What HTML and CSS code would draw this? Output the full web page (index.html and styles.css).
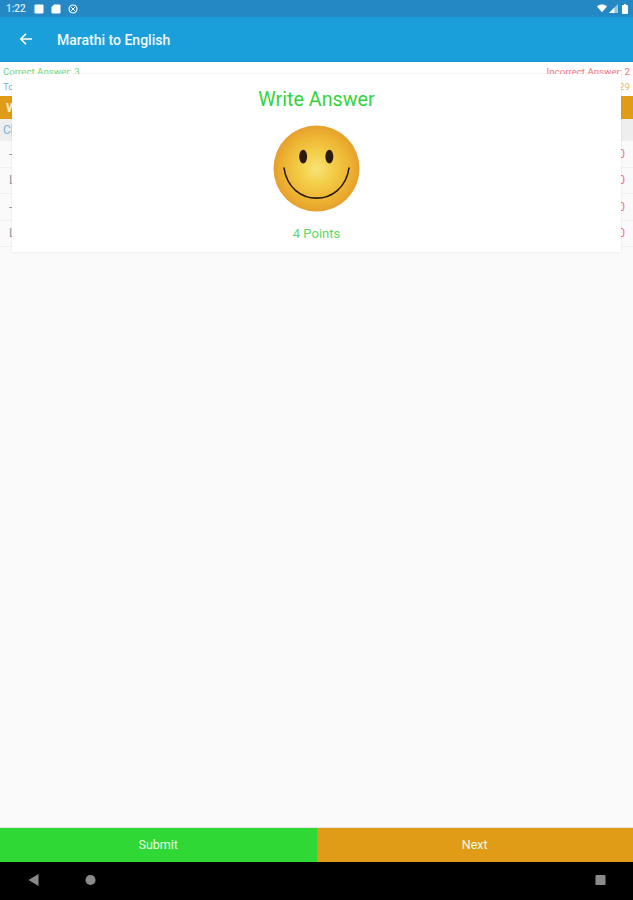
FILE: index.html
```html
<!DOCTYPE html>
<html lang="en">
<head>
    <meta charset="UTF-8">
    <meta name="viewport" content="width=device-width, initial-scale=1.0">
    <title>Marathi to English</title>
    <link rel="stylesheet" href="styles.css">
</head>
<body>
    <div class="status-bar">
        <div class="status-left">
            <span class="clock">1:22</span>
            <svg class="status-icon" viewBox="0 0 10 10"><rect x="0.5" y="0.5" width="9" height="9" rx="1" fill="#fff"/></svg>
            <svg class="status-icon" viewBox="0 0 10 10"><path d="M3 0.5h5.5a1 1 0 0 1 1 1v7a1 1 0 0 1-1 1h-7a1 1 0 0 1-1-1V3z" fill="#fff"/></svg>
            <svg class="status-icon" viewBox="0 0 12 12"><circle cx="6" cy="6" r="4.8" fill="none" stroke="#fff" stroke-width="1.3"/><path d="M3 3l6 6M9 3l-6 6" stroke="#fff" stroke-width="1.2"/></svg>
        </div>
        <div class="status-right">
            <svg class="wifi" viewBox="0 0 12 10"><path d="M0 2.6C3.4-.6 8.6-.6 12 2.6L6 9.6z" fill="#fff"/></svg>
            <svg class="signal" viewBox="0 0 10 10"><path d="M0 10L10 0v10z" fill="#fff" opacity="0.55"/><path d="M0 10L6 4v6z" fill="#fff"/></svg>
            <svg class="battery" viewBox="0 0 6 10"><path d="M2 0h2v1h1a1 1 0 0 1 1 1v7a1 1 0 0 1-1 1H1a1 1 0 0 1-1-1V2a1 1 0 0 1 1-1h1z" fill="#fff"/></svg>
        </div>
    </div>

    <header class="app-bar">
        <svg class="back" viewBox="0 0 14 14"><path d="M13 7H2M7 1.8L1.8 7 7 12.2" fill="none" stroke="#fff" stroke-width="1.6"/></svg>
        <h1>Marathi to English</h1>
    </header>

    <main class="content">
        <div class="score-row">
            <span class="correct">Correct Answer: 3</span>
            <span class="incorrect">Incorrect Answer: 2</span>
        </div>
        <div class="total-row">
            <span class="total">Total Questions: 5</span>
            <span class="time">00:29</span>
        </div>
        <div class="question-bar">Write Answer</div>
        <div class="section-row">Choose</div>
        <div class="list-row"><span>-</span><span class="mark">0</span></div>
        <div class="list-row"><span>L</span><span class="mark">0</span></div>
        <div class="list-row"><span>-</span><span class="mark">0</span></div>
        <div class="list-row"><span>L</span><span class="mark">0</span></div>

        <div class="dialog">
            <h2>Write Answer</h2>
            <svg class="smiley" viewBox="0 0 88 88">
                <defs>
                    <radialGradient id="face" cx="50%" cy="50%" r="50%">
                        <stop offset="0%" stop-color="#f8e27a"/>
                        <stop offset="35%" stop-color="#f4d04a"/>
                        <stop offset="75%" stop-color="#eeb533"/>
                        <stop offset="100%" stop-color="#e6a02c"/>
                    </radialGradient>
                </defs>
                <circle cx="44" cy="44" r="43.5" fill="url(#face)"/>
                <ellipse cx="30.5" cy="32" rx="4" ry="7" fill="#2a1a10"/>
                <ellipse cx="57" cy="32" rx="4" ry="7" fill="#2a1a10"/>
                <path d="M11 43C14 64 29 74 44 74S74 64 77 43" fill="none" stroke="#2a1a10" stroke-width="1.6"/>
            </svg>
            <p class="points">4 Points</p>
        </div>
    </main>

    <div class="actions">
        <div class="action submit">Submit</div>
        <div class="action next">Next</div>
    </div>

    <nav class="nav-bar">
        <div class="nav-left">
            <svg class="nav-icon" viewBox="0 0 10 12"><path d="M10 0v12L0 6z" fill="#8a8a8a"/></svg>
            <svg class="nav-icon" viewBox="0 0 12 12"><circle cx="6" cy="6" r="5.5" fill="#8a8a8a"/></svg>
        </div>
        <svg class="nav-icon" viewBox="0 0 12 12"><rect x="0.5" y="0.5" width="11" height="11" rx="1" fill="#8a8a8a"/></svg>
    </nav>
</body>
</html>
```

FILE: styles.css
```css
* {
    margin: 0;
    padding: 0;
    box-sizing: border-box;
}

body {
    font-family: Roboto, "Liberation Sans", sans-serif;
    width: 633px;
    height: 900px;
    display: flex;
    flex-direction: column;
    overflow: hidden;
    background: #fafafa;
}

.status-bar {
    height: 17px;
    background: #2388c3;
    display: flex;
    align-items: center;
    justify-content: space-between;
    padding: 0 5px 0 6px;
}

.status-left,
.status-right {
    display: flex;
    align-items: center;
}

.status-left {
    gap: 7px;
}

.status-right {
    gap: 2px;
}

.clock {
    color: #dcecf6;
    font-size: 10px;
    font-weight: 500;
    width: 21px;
}

.status-icon {
    width: 10px;
    height: 10px;
}

.wifi {
    width: 10px;
    height: 9px;
}

.signal {
    width: 9px;
    height: 9px;
    margin-right: 2px;
}

.battery {
    width: 6px;
    height: 10px;
}

.app-bar {
    height: 45px;
    background: #1a9fdb;
    border-bottom: 1px solid #1893cb;
    display: flex;
    align-items: center;
    padding: 2px 0 0 19px;
    gap: 24px;
}

.back {
    width: 14px;
    height: 14px;
    margin-top: -3px;
}

.app-bar h1 {
    color: #f2f9fd;
    font-size: 14px;
    font-weight: 500;
}

.content {
    flex: 1;
    position: relative;
    overflow: hidden;
}

.score-row,
.total-row {
    display: flex;
    justify-content: space-between;
    font-size: 9.7px;
    padding: 0 3px;
    background: #fff;
}

.score-row {
    height: 17px;
    padding-top: 4px;
}

.total-row {
    height: 17px;
    padding-top: 2px;
}

.correct {
    color: #6fd878;
}

.incorrect {
    color: #f4727f;
}

.total {
    color: #7db4dc;
}

.time {
    color: #e6b56c;
}

.question-bar {
    height: 23px;
    background: #e09c17;
    color: #fbeed2;
    font-size: 13px;
    font-weight: 700;
    line-height: 23px;
    padding-left: 6px;
}

.section-row {
    height: 22px;
    background: #eeeeee;
    color: #7db4dc;
    font-size: 12px;
    line-height: 22px;
    padding-left: 3px;
}

.list-row {
    height: 26.5px;
    display: flex;
    align-items: center;
    justify-content: space-between;
    padding: 0 8px 0 9px;
    border-bottom: 1px solid #f0f0f0;
    color: #999;
    font-size: 12px;
}

.mark {
    color: #f070a0;
}

.dialog {
    position: absolute;
    top: 12px;
    left: 12px;
    width: 609px;
    height: 178px;
    background: #fff;
    box-shadow: 0 0 2px rgba(0, 0, 0, 0.1);
    display: flex;
    flex-direction: column;
    align-items: center;
}

.dialog h2 {
    color: #33d43a;
    font-size: 19.7px;
    font-weight: 400;
    line-height: 24px;
    margin-top: 14px;
}

.smiley {
    width: 87px;
    height: 87px;
    margin-top: 13px;
}

.points {
    color: #5ad865;
    font-size: 13px;
    line-height: 15px;
    margin-top: 14px;
}

.actions {
    height: 35px;
    display: flex;
    border-top: 1px solid #e4e4e4;
}

.action {
    flex: 1;
    display: flex;
    align-items: center;
    justify-content: center;
    padding-bottom: 2px;
    color: #e8fde9;
    font-size: 12.5px;
}

.submit {
    background: #2fd835;
}

.next {
    background: #e09c17;
}

.nav-bar {
    height: 38px;
    background: #000;
    display: flex;
    align-items: center;
    justify-content: space-between;
    padding: 0 27px 2px 28px;
}

.nav-left {
    display: flex;
    align-items: center;
    gap: 46px;
}

.nav-icon {
    width: 11px;
    height: 12px;
}
```
